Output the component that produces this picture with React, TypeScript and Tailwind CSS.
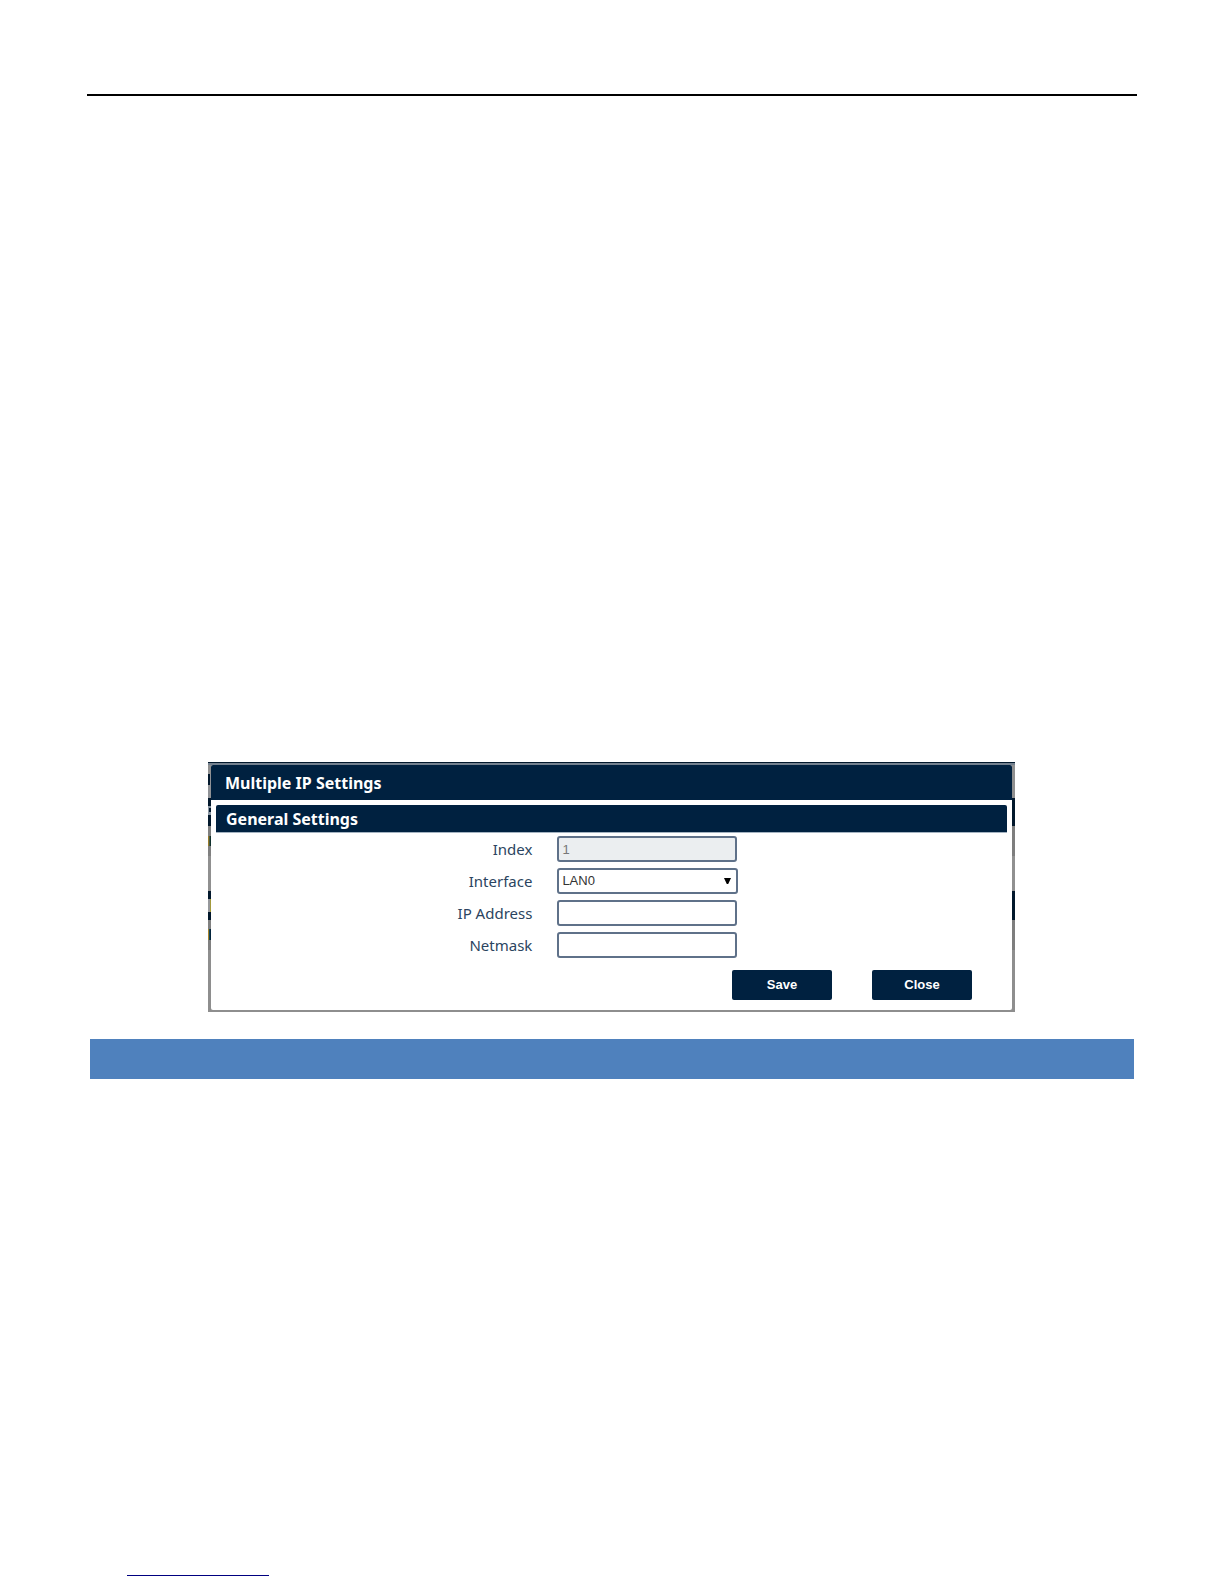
import React, {FC} from 'react';

interface IStrip {
    height: string
    color: string
}

// Slices of the dimmed page that stay visible beside the dialog
const leftStrips: IStrip[] = [
    {height: 'h-[9px]', color: 'bg-[#909090]'},
    {height: 'h-[11px]', color: 'bg-linear-to-r from-[#02182c] from-67% to-[#909296] to-67%'},
    {height: 'h-[13px]', color: 'bg-[#909296]'},
    {height: 'h-[8px]', color: 'bg-[#02182c]'},
    {height: 'h-[2px]', color: 'bg-[#8c98a4]'},
    {height: 'h-[4px]', color: 'bg-linear-to-r from-[#8c98a4] from-34% to-[#02182c] to-34%'},
    {height: 'h-[3px]', color: 'bg-[#8c98a4]'},
    {height: 'h-[11px]', color: 'bg-[#02182c]'},
    {height: 'h-[10px]', color: 'bg-[#808080]'},
    {height: 'h-[10px]', color: 'bg-linear-to-r from-[#9a7a2c] from-34% via-[#7d8a50] via-34% to-[#10302c] to-67%'},
    {height: 'h-[10px]', color: 'bg-[#808080]'},
    {height: 'h-[35px]', color: 'bg-[#909090]'},
    {height: 'h-[8px]', color: 'bg-[#02182c]'},
    {height: 'h-[13px]', color: 'bg-linear-to-r from-[#96989c] from-67% to-[#a39a3c] to-67%'},
    {height: 'h-[8px]', color: 'bg-[#02182c]'},
    {height: 'h-[9px]', color: 'bg-[#808080]'},
    {height: 'h-[11px]', color: 'bg-linear-to-r from-[#a8842c] from-34% via-[#2c6c74] via-34% to-[#02243c] to-67%'},
    {height: 'h-[10px]', color: 'bg-[#808080]'},
]

const rightStrips: IStrip[] = [
    {height: 'h-[33px]', color: 'bg-[#909090]'},
    {height: 'h-[28px]', color: 'bg-[#02182c]'},
    {height: 'h-[30px]', color: 'bg-[#7e7e7e]'},
    {height: 'h-[35px]', color: 'bg-[#909090]'},
    {height: 'h-[29px]', color: 'bg-[#02182c]'},
    {height: 'h-[30px]', color: 'bg-[#7e7e7e]'},
]

const Backdrop: FC<{strips: IStrip[]}> = ({strips}) => (
    <div className="w-[3px] shrink-0">
        {strips.map((strip, index) => (
            <div key={index} className={`${strip.height} ${strip.color}`}/>
        ))}
    </div>
)

const Row: FC<{id: string, label: string, children: React.ReactNode}> = ({id, label, children}) => (
    <div className="flex items-center">
        <label htmlFor={id} className="w-2/5 text-right text-[15px] leading-6 text-[#2b4460]">{label}</label>
        <div className="ml-[25px] flex-1">{children}</div>
    </div>
)

const inputClass = 'block h-[26px] w-[180px] rounded-[3px] border-2 border-[#5f7189] bg-white px-[3px] font-["Liberation_Sans",sans-serif] text-[13px] text-[#333] disabled:bg-[#ebeef0] disabled:text-[#777]'
const buttonClass = 'h-[30px] w-[100px] rounded-[2px] bg-[#002140] font-["Liberation_Sans",sans-serif] text-[13px] font-bold text-white'

const App = () => {
    return (
        <main className='min-h-screen bg-white px-[87px] pt-[94px] font-["Noto_Sans",sans-serif]'>
            <hr className="border-0 border-t-2 border-black"/>

            <section className="mt-[666px] mr-[122px] ml-[121px] bg-[#8e8e8e]">
                <div className="h-px bg-[#02182c]"/>
                <div className="h-0.5 bg-[#73808e]"/>
                <div className="flex">
                    <Backdrop strips={leftStrips}/>
                    <div className="mb-0.5 min-w-0 flex-1 rounded-[2px] bg-white pb-[10px]">
                        <h1 className="h-[35px] rounded-t-[2px] bg-[#002140] px-[14px] text-base leading-[36px] font-bold text-white">
                            Multiple IP Settings
                        </h1>
                        <form className="px-[5px] pt-[5px]" onSubmit={(e) => e.preventDefault()}>
                            <h2 className="h-[28px] rounded-t-[2px] border-b border-[#a4b3c1] bg-[#002140] px-[10px] text-base leading-[28px] font-bold text-white">
                                General Settings
                            </h2>
                            <div className="mt-[3px] space-y-[6px]">
                                <Row id="index" label="Index">
                                    <input id="index" disabled defaultValue="1" className={inputClass}/>
                                </Row>
                                <Row id="interface" label="Interface">
                                    <div className="relative w-[181px]">
                                        <select id="interface" className={`${inputClass} min-w-full appearance-none`}>
                                            <option>LAN0</option>
                                        </select>
                                        <svg className="pointer-events-none absolute top-[10px] right-[7px] h-[6px] w-[7px]" viewBox="0 0 7 6">
                                            <path d="M0 0h7L4.2 6H2.8z" fill="#000"/>
                                        </svg>
                                    </div>
                                </Row>
                                <Row id="ip" label="IP Address">
                                    <input id="ip" className={inputClass}/>
                                </Row>
                                <Row id="netmask" label="Netmask">
                                    <input id="netmask" className={inputClass}/>
                                </Row>
                            </div>
                            <div className="mt-3 mr-[35px] flex justify-end gap-10">
                                <button type="submit" className={buttonClass}>Save</button>
                                <button type="button" className={buttonClass}>Close</button>
                            </div>
                        </form>
                    </div>
                    <Backdrop strips={rightStrips}/>
                </div>
            </section>

            <div className="mx-[3px] mt-[27px] h-10 bg-[#4f81bd]"/>

            <footer className="mt-[496px] ml-10">
                <div className="h-px w-[142px] bg-[#000080]"/>
            </footer>
        </main>
    );
};

export default App;
